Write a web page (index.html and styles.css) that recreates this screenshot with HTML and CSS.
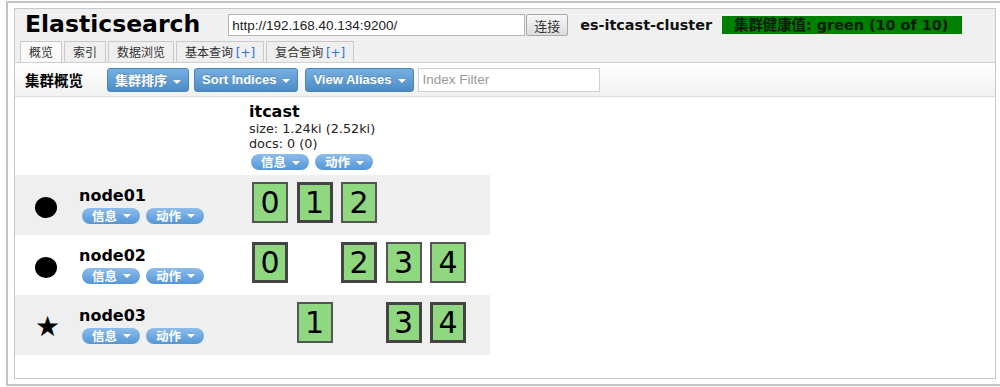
FILE: index.html
```html
<!DOCTYPE html>
<html lang="zh">

<head>
    <meta charset="utf-8">
    <meta name="viewport" content="width=device-width, initial-scale=1.0">
    <title>Elasticsearch head</title>
    <link rel="stylesheet" href="styles.css">
</head>

<body>
    <div class="frame">
        <div class="app">
            <div class="top">
                <div class="header">
                    <h1 class="logo">Elasticsearch</h1>
                    <input class="url" type="text" value="http://192.168.40.134:9200/">
                    <button class="connect">连接</button>
                    <span class="cluster-name">es-itcast-cluster</span>
                    <span class="health">集群健康值: green (10 of 10)</span>
                </div>
                <nav class="tabs">
                    <div class="tab active">概览</div>
                    <div class="tab">索引</div>
                    <div class="tab">数据浏览</div>
                    <div class="tab">基本查询 <span class="plus">[+]</span></div>
                    <div class="tab">复合查询 <span class="plus">[+]</span></div>
                </nav>
            </div>

            <div class="toolbar">
                <span class="toolbar-title">集群概览</span>
                <button class="tbtn">集群排序<i class="caret"></i></button>
                <button class="tbtn">Sort Indices<i class="caret"></i></button>
                <button class="tbtn">View Aliases<i class="caret"></i></button>
                <input class="filter" type="text" placeholder="Index Filter">
            </div>

            <table class="overview">
                <tr class="head">
                    <td class="node-cell"></td>
                    <td class="index-cell">
                        <div class="index-name">itcast</div>
                        <div class="index-meta">size: 1.24ki (2.52ki)</div>
                        <div class="index-meta">docs: 0 (0)</div>
                        <div class="pills">
                            <button class="pill">信息<i class="caret"></i></button>
                            <button class="pill">动作<i class="caret"></i></button>
                        </div>
                    </td>
                </tr>
                <tr class="node odd">
                    <td class="node-cell">
                        <div class="node-info">
                            <span class="node-icon dot"></span>
                            <div>
                                <div class="node-name">node01</div>
                                <div class="pills">
                                    <button class="pill">信息<i class="caret"></i></button>
                                    <button class="pill">动作<i class="caret"></i></button>
                                </div>
                            </div>
                        </div>
                    </td>
                    <td class="index-cell">
                        <div class="shards">
                            <div class="shard">0</div>
                            <div class="shard primary">1</div>
                            <div class="shard">2</div>
                        </div>
                    </td>
                </tr>
                <tr class="node">
                    <td class="node-cell">
                        <div class="node-info">
                            <span class="node-icon dot"></span>
                            <div>
                                <div class="node-name">node02</div>
                                <div class="pills">
                                    <button class="pill">信息<i class="caret"></i></button>
                                    <button class="pill">动作<i class="caret"></i></button>
                                </div>
                            </div>
                        </div>
                    </td>
                    <td class="index-cell">
                        <div class="shards">
                            <div class="shard primary">0</div>
                            <div class="shard empty">1</div>
                            <div class="shard primary">2</div>
                            <div class="shard">3</div>
                            <div class="shard">4</div>
                        </div>
                    </td>
                </tr>
                <tr class="node odd">
                    <td class="node-cell">
                        <div class="node-info">
                            <span class="node-icon star">★</span>
                            <div>
                                <div class="node-name">node03</div>
                                <div class="pills">
                                    <button class="pill">信息<i class="caret"></i></button>
                                    <button class="pill">动作<i class="caret"></i></button>
                                </div>
                            </div>
                        </div>
                    </td>
                    <td class="index-cell">
                        <div class="shards">
                            <div class="shard empty">0</div>
                            <div class="shard">1</div>
                            <div class="shard empty">2</div>
                            <div class="shard primary">3</div>
                            <div class="shard primary">4</div>
                        </div>
                    </td>
                </tr>
            </table>
        </div>
    </div>
</body>

</html>
```

FILE: styles.css
```css
* {
    box-sizing: border-box;
}

body {
    margin: 0;
    padding: 0;
    background: white;
    font-family: "DejaVu Sans", "Noto Sans CJK SC", sans-serif;
    color: #000;
}

.frame {
    margin: 1px 0 0 6px;
    width: 994px;
    height: 385px;
    border: 2px solid #c4c4c4;
    border-right: 0;
    padding: 5px 4px 5px 6px;
}

.app {
    width: 982px;
    height: 371px;
    border: 1px solid #c8c8c8;
    background: white;
}

/* header */

.top {
    background: #f0f0f0;
}

.header {
    display: flex;
    align-items: center;
    height: 32px;
    padding-left: 10px;
}

.logo {
    margin: 0 28px 0 0;
    font-size: 23.5px;
    font-weight: bold;
    line-height: 1;
}

.url {
    width: 297px;
    height: 22px;
    margin: 0;
    padding: 0 3px;
    border: 1px solid #b5b5b5;
    background: white;
    font-family: "Liberation Sans", sans-serif;
    font-size: 13.5px;
    color: #222;
}

.connect {
    height: 22px;
    margin: 0 0 0 1px;
    padding: 0 7px;
    border: 1px solid #a8a8a8;
    border-radius: 2px;
    background: linear-gradient(#f8f8f8, #dcdcdc);
    font-family: "Noto Sans CJK SC", sans-serif;
    font-size: 13px;
    color: #333;
}

.cluster-name {
    margin-left: 12px;
    font-size: 14.4px;
    font-weight: bold;
    color: #111;
}

.health {
    margin-left: 10px;
    height: 18px;
    line-height: 18px;
    padding: 0 14px 0 12px;
    background: #008000;
    font-size: 14.4px;
    font-weight: bold;
    color: #0b1a0b;
}

.tabs {
    display: flex;
    gap: 2px;
    padding-left: 5px;
    height: 21px;
    align-items: flex-end;
}

.tab {
    height: 21px;
    line-height: 20px;
    padding: 0 8px;
    border: 1px solid #c9c9c9;
    border-bottom: 0;
    background: #efefef;
    font-family: "Noto Sans CJK SC", sans-serif;
    font-size: 12px;
    color: #333;
}

.tab.active {
    background: #fafafa;
}

.plus {
    font-family: "DejaVu Sans", sans-serif;
    color: #2d6fd2;
}

/* toolbar */

.toolbar {
    display: flex;
    align-items: center;
    height: 35px;
    padding-left: 10px;
    border-top: 1px solid #cfcfcf;
    border-bottom: 1px solid #dcdcdc;
    background: linear-gradient(#ffffff, #f1f1f1);
}

.toolbar-title {
    margin-right: 24px;
    font-family: "Noto Sans CJK SC", sans-serif;
    font-size: 14.5px;
    font-weight: bold;
}

.tbtn {
    height: 24px;
    margin: 0 7px 0 0;
    padding: 0 7px;
    border: 1px solid #4a86bf;
    border-radius: 3px;
    background: linear-gradient(#77afe0, #4c8bc6);
    font-family: "Liberation Sans", "Noto Sans CJK SC", sans-serif;
    font-size: 13px;
    font-weight: bold;
    color: white;
    text-shadow: 0 -1px 0 rgba(0, 0, 0, 0.2);
}

.tbtn:first-of-type {
    margin-right: 5px;
}

.caret {
    display: inline-block;
    margin-left: 6px;
    vertical-align: middle;
    border-top: 4px solid white;
    border-left: 4px solid transparent;
    border-right: 4px solid transparent;
}

.filter {
    width: 182px;
    height: 24px;
    margin: 0 0 0 -3px;
    padding: 0 4px;
    border: 1px solid #cfcfcf;
    background: white;
    font-family: "Liberation Sans", sans-serif;
    font-size: 13.5px;
}

.filter::placeholder {
    color: #999;
}

/* cluster overview */

.overview {
    border-collapse: collapse;
}

.overview td {
    padding: 0;
    vertical-align: middle;
}

.node-cell {
    width: 234px;
}

.index-cell {
    width: 241px;
}

.head .index-cell {
    height: 78px;
    padding: 6px 0 5px 0 !important;
    vertical-align: top;
}

.index-name {
    font-size: 16px;
    font-weight: bold;
    line-height: 18px;
}

.index-meta {
    font-size: 12.8px;
    line-height: 15px;
    color: #222;
}

.pills {
    display: flex;
    gap: 6px;
    padding-left: 2px;
    margin-top: 3px;
}

.pill {
    height: 16px;
    margin: 0;
    padding: 0 9px 0 10px;
    border: 0;
    border-radius: 8px;
    background: linear-gradient(#8cbcec, #5496d6);
    font-family: "Noto Sans CJK SC", sans-serif;
    font-size: 12.5px;
    font-weight: bold;
    line-height: 16px;
    color: white;
}

.pill .caret {
    margin-top: -2px;
}

.node {
    height: 60px;
}

.node.odd {
    background: #efefef;
}

.node-info {
    display: flex;
    align-items: center;
}

.node-icon {
    width: 22px;
    margin: 4px 23px 0 20px;
    text-align: center;
}

.node-icon.dot {
    height: 21px;
    border-radius: 50%;
    background: #000;
}

.node-icon.star {
    font-size: 28px;
    line-height: 24px;
}

.node-name {
    margin-left: -1px;
    font-size: 16px;
    font-weight: bold;
    line-height: 18px;
}

.node .pills {
    margin-top: 3px;
}

.shards {
    display: flex;
    gap: 8.5px;
    padding: 0 0 5px 3px;
}

.shard {
    width: 36px;
    height: 41px;
    border: 2px solid #555;
    background: #8fd87f;
    font-size: 30px;
    line-height: 37px;
    text-align: center;
}

.shard.primary {
    border: 3px solid #444;
    line-height: 35px;
}

.shard.empty {
    visibility: hidden;
}
```
